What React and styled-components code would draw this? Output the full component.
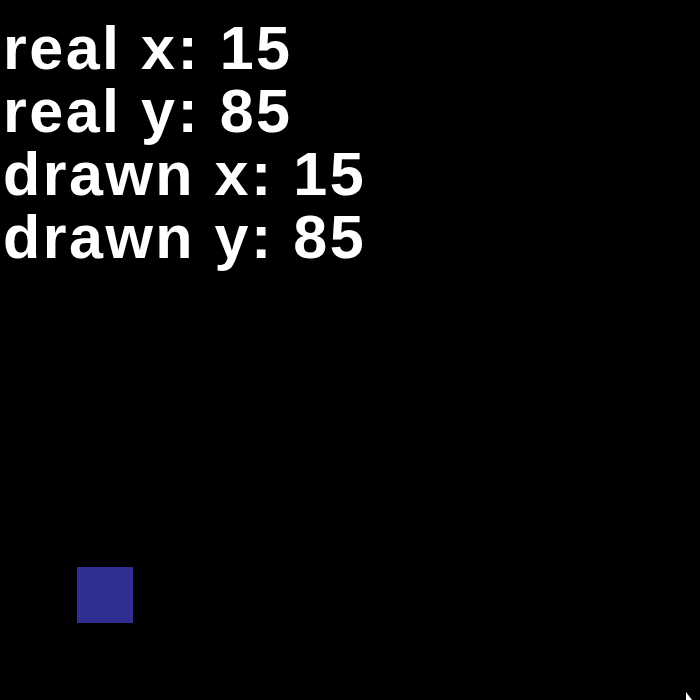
import React from 'react';
import styled, { createGlobalStyle } from 'styled-components';

const GlobalStyle = createGlobalStyle`
  html, body {
    margin: 0;
    padding: 0;
    background: #000;
  }
`;

const Screen = styled.div`
  position: relative;
  width: 700px;
  height: 700px;
  background: #000;
  overflow: hidden;
`;

const Readout = styled.div`
  display: flex;
  flex-direction: column;
  padding: 17px 0 0 3px;
  color: #fff;
  font-family: "Liberation Sans", Arial, sans-serif;
  font-weight: bold;
  font-size: 61px;
  line-height: 63px;
  letter-spacing: 2.5px;
  white-space: pre;
`;

const Sprite = styled.div`
  position: absolute;
  width: 56px;
  height: 56px;
  background: #2f2f92;
`;

const Cursor = styled.svg`
  position: absolute;
  left: 686px;
  top: 692px;
`;

const readings = [
  ['real x', 15],
  ['real y', 85],
  ['drawn x', 15],
  ['drawn y', 85],
];

export default function App() {
  const player = { x: 77, y: 567 };
  return (
    <Screen>
      <GlobalStyle />
      <Readout>
        {readings.map(([label, value]) => (
          <span key={label}>{label}: {value}</span>
        ))}
      </Readout>
      <Sprite style={{ left: player.x, top: player.y }} />
      <Cursor width="12" height="12" viewBox="0 0 12 12">
        <path d="M0 0 L0 12 L3 9 L6 12 L9 12 Z" fill="#fff" />
      </Cursor>
    </Screen>
  );
}
